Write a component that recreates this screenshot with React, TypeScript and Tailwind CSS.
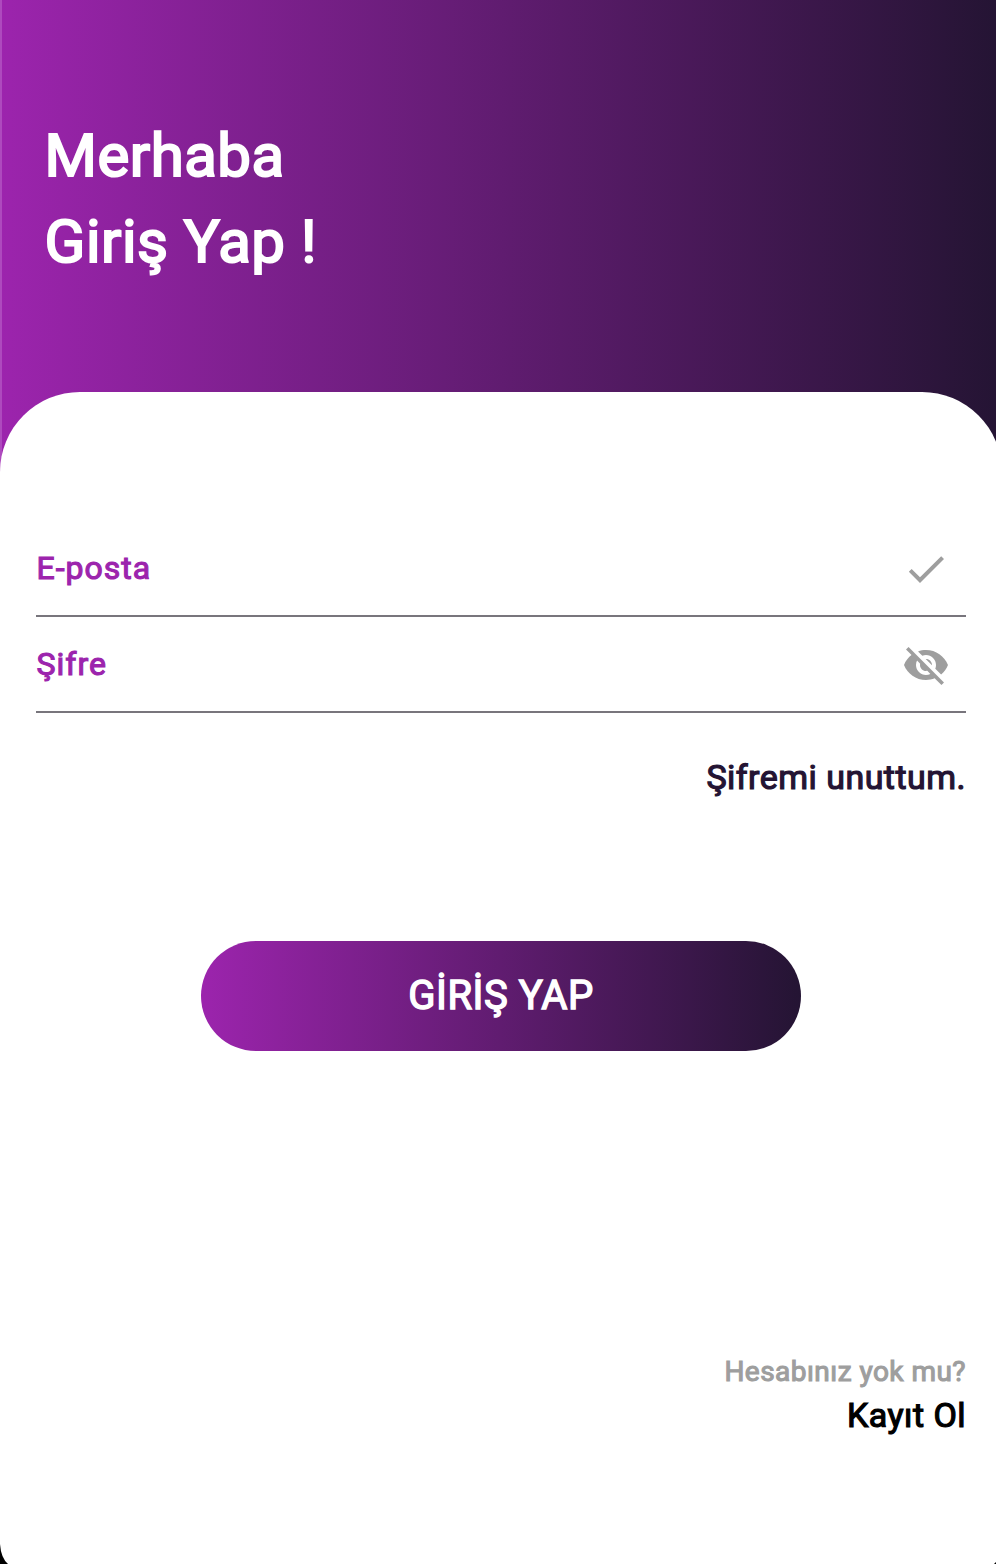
export default function App() {
  return (
    <main className="relative flex h-[1564px] w-[996px] flex-col overflow-hidden bg-[linear-gradient(90deg,#ae4abe_0_2px,transparent_2px),linear-gradient(90deg,#9c24ad_2px,#241433_1002px)] font-['Roboto',sans-serif] font-normal">
      <header className="h-[392px] shrink-0 pt-[113px] pl-[44.6px] text-[60px] leading-[86px] tracking-[0.5px] text-white [-webkit-text-stroke:2.1px_currentColor]">
        <h1>Merhaba<br />Giriş Yap !</h1>
      </header>
      <section className="flex h-[1172px] w-[1002px] shrink-0 flex-col rounded-t-[80px] bg-white pr-9 pl-9 pt-[129px]">
        <div className="flex h-24 w-[930px] items-center justify-between border-b-2 border-[#78757c] pr-4 pl-[0.5px] text-[32px] tracking-[1px] text-[#9c24ad] [-webkit-text-stroke:1.1px_currentColor]">
          <span>E-posta</span>
          <svg className="mt-[2px] size-12 fill-[#9e9e9e] stroke-none" viewBox="0 0 24 24"><path d="M9 16.17 4.83 12l-1.42 1.41L9 19 21 7l-1.41-1.41z" /></svg>
        </div>
        <div className="flex h-24 w-[930px] items-center justify-between border-b-2 border-[#78757c] pr-4 pl-[0.5px] text-[32px] tracking-[1px] text-[#9c24ad] [-webkit-text-stroke:1.1px_currentColor]">
          <span>Şifre</span>
          <svg className="mt-[2px] size-12 fill-[#9e9e9e] stroke-none" viewBox="0 0 24 24"><path d="M12 7c2.76 0 5 2.24 5 5 0 .65-.13 1.26-.36 1.83l2.92 2.92c1.51-1.26 2.7-2.89 3.43-4.75-1.73-4.39-6-7.5-11-7.5-1.4 0-2.74.25-3.98.7l2.16 2.16C10.74 7.13 11.35 7 12 7M2 4.27l2.28 2.28.46.46C3.08 8.3 1.78 10.02 1 12c1.73 4.39 6 7.5 11 7.5 1.55 0 3.03-.3 4.38-.84l.42.42L19.73 22 21 20.73 3.27 3zM7.53 9.8l1.55 1.55c-.05.21-.08.43-.08.65 0 1.66 1.34 3 3 3 .22 0 .44-.03.65-.08l1.55 1.55c-.67.33-1.41.53-2.2.53-2.76 0-5-2.24-5-5 0-.79.2-1.53.53-2.2m4.31-.78 3.15 3.15.02-.16c0-1.66-1.34-3-3-3z" /></svg>
        </div>
        <a className="mt-[39px] text-right text-[34px] leading-[50px] tracking-[0.47px] text-[#241433] [-webkit-text-stroke:1.2px_currentColor]">Şifremi unuttum.</a>
        <button className="mt-[139px] h-[110px] w-[600px] self-center rounded-full bg-[linear-gradient(90deg,#9c24ad,#241433)] text-[40px] tracking-[0.5px] text-white [-webkit-text-stroke:1.4px_currentColor]">GİRİŞ YAP</button>
        <footer className="mt-[299px] text-right">
          <p className="text-[28px] leading-[44px] tracking-[0.46px] text-[#9e9e9e] [-webkit-text-stroke:1.1px_currentColor]">Hesabınız yok mu?</p>
          <p className="-mt-px text-[34px] leading-[44px] tracking-[0.47px] text-black [-webkit-text-stroke:1.2px_currentColor]">Kayıt Ol</p>
        </footer>
      </section>
      <svg className="absolute bottom-0 left-0 h-5 w-2" viewBox="0 0 8 20"><path d="M0 0Q1 14 8 20H0z" /></svg>
      <svg className="absolute right-0 bottom-0 size-[2px]" viewBox="0 0 2 2"><path d="M2 0V2H0z" /></svg>
    </main>
  );
}
